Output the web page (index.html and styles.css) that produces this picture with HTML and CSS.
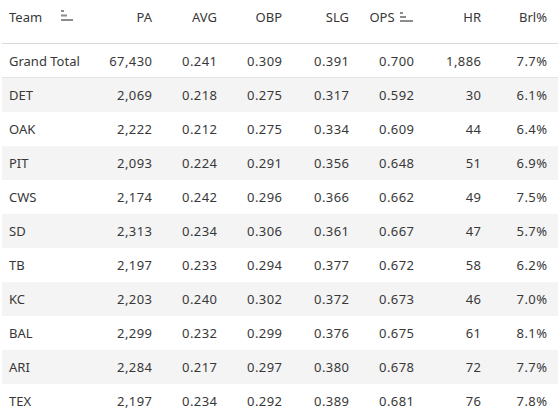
FILE: index.html
```html
<!DOCTYPE html>
<html>
<head>
<meta charset="utf-8">
<link rel="stylesheet" href="styles.css">
</head>
<body>
<div class="table">
  <div class="row head">
    <div class="cell team">Team <svg class="sort big" width="12" height="12" viewBox="0 0 12 12"><rect x="0" y="0" width="3" height="2"/><rect x="0" y="4.5" width="6" height="2"/><rect x="0" y="9" width="12" height="2"/></svg></div>
    <div class="cell">PA</div>
    <div class="cell">AVG</div>
    <div class="cell">OBP</div>
    <div class="cell">SLG</div>
    <div class="cell ops">OPS <svg class="sort small" width="14" height="10" viewBox="0 0 14 10"><rect x="0" y="0" width="3" height="2"/><rect x="0" y="4" width="6" height="2"/><rect x="0" y="8" width="13" height="2"/></svg></div>
    <div class="cell">HR</div>
    <div class="cell">Brl%</div>
  </div>
  <div class="row total">
    <div class="cell team">Grand Total</div><div class="cell num">67,430</div><div class="cell num">0.241</div><div class="cell num">0.309</div><div class="cell num">0.391</div><div class="cell num">0.700</div><div class="cell num">1,886</div><div class="cell num">7.7%</div>
  </div>
  <div class="row alt">
    <div class="cell team">DET</div><div class="cell num">2,069</div><div class="cell num">0.218</div><div class="cell num">0.275</div><div class="cell num">0.317</div><div class="cell num">0.592</div><div class="cell num">30</div><div class="cell num">6.1%</div>
  </div>
  <div class="row">
    <div class="cell team">OAK</div><div class="cell num">2,222</div><div class="cell num">0.212</div><div class="cell num">0.275</div><div class="cell num">0.334</div><div class="cell num">0.609</div><div class="cell num">44</div><div class="cell num">6.4%</div>
  </div>
  <div class="row alt">
    <div class="cell team">PIT</div><div class="cell num">2,093</div><div class="cell num">0.224</div><div class="cell num">0.291</div><div class="cell num">0.356</div><div class="cell num">0.648</div><div class="cell num">51</div><div class="cell num">6.9%</div>
  </div>
  <div class="row">
    <div class="cell team">CWS</div><div class="cell num">2,174</div><div class="cell num">0.242</div><div class="cell num">0.296</div><div class="cell num">0.366</div><div class="cell num">0.662</div><div class="cell num">49</div><div class="cell num">7.5%</div>
  </div>
  <div class="row alt">
    <div class="cell team">SD</div><div class="cell num">2,313</div><div class="cell num">0.234</div><div class="cell num">0.306</div><div class="cell num">0.361</div><div class="cell num">0.667</div><div class="cell num">47</div><div class="cell num">5.7%</div>
  </div>
  <div class="row">
    <div class="cell team">TB</div><div class="cell num">2,197</div><div class="cell num">0.233</div><div class="cell num">0.294</div><div class="cell num">0.377</div><div class="cell num">0.672</div><div class="cell num">58</div><div class="cell num">6.2%</div>
  </div>
  <div class="row alt">
    <div class="cell team">KC</div><div class="cell num">2,203</div><div class="cell num">0.240</div><div class="cell num">0.302</div><div class="cell num">0.372</div><div class="cell num">0.673</div><div class="cell num">46</div><div class="cell num">7.0%</div>
  </div>
  <div class="row">
    <div class="cell team">BAL</div><div class="cell num">2,299</div><div class="cell num">0.232</div><div class="cell num">0.299</div><div class="cell num">0.376</div><div class="cell num">0.675</div><div class="cell num">61</div><div class="cell num">8.1%</div>
  </div>
  <div class="row alt">
    <div class="cell team">ARI</div><div class="cell num">2,284</div><div class="cell num">0.217</div><div class="cell num">0.297</div><div class="cell num">0.380</div><div class="cell num">0.678</div><div class="cell num">72</div><div class="cell num">7.7%</div>
  </div>
  <div class="row">
    <div class="cell team">TEX</div><div class="cell num">2,197</div><div class="cell num">0.234</div><div class="cell num">0.292</div><div class="cell num">0.389</div><div class="cell num">0.681</div><div class="cell num">76</div><div class="cell num">7.8%</div>
  </div>
</div>
</body>
</html>
```
FILE: styles.css
```css
html, body {
  margin: 0;
  padding: 0;
  background: #ffffff;
}
body {
  font-family: "Noto Sans", "Open Sans", sans-serif;
  font-size: 13px;
  color: #383838;
  overflow: hidden;
}
.table {
  margin-left: 2px;
  width: 556px;
}
.row {
  display: grid;
  grid-template-columns: 98px 62px 65px 65px 67px 65px 67px 66px;
  height: 34px;
  align-items: center;
}
.row.alt {
  background: #f4f4f4;
}
.row.head {
  height: 43px;
  align-items: start;
  border-bottom: 1px solid #d9d9d9;
}
.row.total {
  height: 33px;
  border-bottom: 1px solid #e3e3e3;
}
.cell {
  text-align: right;
  padding-right: 10px;
  white-space: nowrap;
}
.cell.num {
  letter-spacing: 0.45px;
  padding-right: 9.5px;
}
.head .cell {
  padding-top: 8px;
}
.cell.team {
  text-align: left;
  padding-left: 7px;
  padding-right: 0;
}
.sort {
  fill: #8c8c8c;
  vertical-align: 0px;
}
.sort.big {
  margin-left: 16px;
}
.sort.small {
  margin-left: 2px;
}
```
